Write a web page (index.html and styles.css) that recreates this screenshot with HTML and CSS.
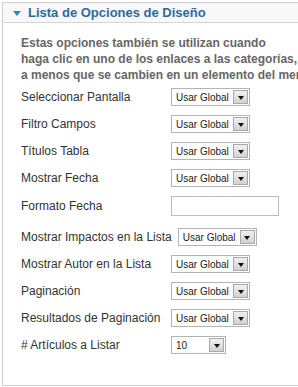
FILE: index.html
```html
<!DOCTYPE html>
<html lang="es">
  <head>
    <meta charset="UTF-8" />
    <title>Lista de Opciones de Diseño</title>
    <link rel="stylesheet" href="styles.css">
  </head>
  <body>
    <div class="panel">
      <h3 class="panel-toggler"><span class="arrow"></span>Lista de Opciones de Diseño</h3>

      <div class="panel-body">
        <p class="param-desc">
          Estas opciones también se utilizan cuando<br />
          haga clic en uno de los enlaces a las categorías,<br />
          a menos que se cambien en un elemento del menú.
        </p>

        <div class="paramlist">
          <div class="param">
            <label>Seleccionar Pantalla</label>
            <div class="select"><span>Usar Global</span><b class="drop"></b></div>
          </div>
          <div class="param">
            <label>Filtro Campos</label>
            <div class="select"><span>Usar Global</span><b class="drop"></b></div>
          </div>
          <div class="param">
            <label>Títulos Tabla</label>
            <div class="select"><span>Usar Global</span><b class="drop"></b></div>
          </div>
          <div class="param">
            <label>Mostrar Fecha</label>
            <div class="select"><span>Usar Global</span><b class="drop"></b></div>
          </div>
          <div class="param param-text">
            <label>Formato Fecha</label>
            <input type="text" class="text-input" />
          </div>
          <div class="param">
            <label>Mostrar Impactos en la Lista</label>
            <div class="select"><span>Usar Global</span><b class="drop"></b></div>
          </div>
          <div class="param">
            <label>Mostrar Autor en la Lista</label>
            <div class="select"><span>Usar Global</span><b class="drop"></b></div>
          </div>
          <div class="param">
            <label>Paginación</label>
            <div class="select"><span>Usar Global</span><b class="drop"></b></div>
          </div>
          <div class="param">
            <label>Resultados de Paginación</label>
            <div class="select"><span>Usar Global</span><b class="drop"></b></div>
          </div>
          <div class="param">
            <label># Artículos a Listar</label>
            <div class="select select-small"><span>10</span><b class="drop"></b></div>
          </div>
        </div>
      </div>
    </div>
  </body>
</html>
```

FILE: styles.css
```css
* {
  margin: 0;
  padding: 0;
  box-sizing: border-box;
  font-family: "Liberation Sans", Arial, sans-serif;
}

body {
  background: white;
  overflow: hidden;
  height: 387px;
}

.panel {
  margin: 2px 0 0 2px;
  width: 330px;
  height: 384px;
  border: 1px solid #cfcfcf;
}

.panel-toggler {
  height: 20px;
  background: #f8f8f8;
  border-bottom: 1px solid #d4d4d4;
  color: #2b6c9e;
  font-size: 13px;
  font-weight: bold;
  line-height: 20px;
  display: flex;
  align-items: center;
  padding-left: 10px;
}

.arrow {
  width: 0;
  height: 0;
  border-left: 4px solid transparent;
  border-right: 4px solid transparent;
  border-top: 5px solid #3b82b8;
  margin-right: 7px;
  margin-top: 1px;
}

.panel-body {
  padding: 12px 0 0 18px;
}

.param-desc {
  color: #666;
  font-size: 12px;
  font-weight: bold;
  line-height: 16px;
  white-space: nowrap;
}

.paramlist {
  margin-top: 5px;
  display: flex;
  flex-direction: column;
  gap: 9px;
}

.param {
  display: flex;
  align-items: center;
  gap: 6px;
}

.param label {
  min-width: 144px;
  white-space: nowrap;
  color: #333;
  font-size: 12px;
}

.param-text {
  margin-bottom: 3px;
}

.select {
  width: 79px;
  height: 18px;
  border: 1px solid #b4b4b4;
  background: white;
  display: flex;
  align-items: center;
  justify-content: space-between;
  padding: 1px 1px 1px 4px;
  font-size: 10px;
  color: #222;
}

.select-small {
  width: 55px;
}

.drop {
  width: 15px;
  height: 14px;
  background: linear-gradient(#f0f0f0, #d2d2d2);
  border: 1px solid #a9a9a9;
  display: flex;
  align-items: center;
  justify-content: center;
}

.drop::after {
  content: "";
  width: 0;
  height: 0;
  border-left: 3.5px solid transparent;
  border-right: 3.5px solid transparent;
  border-top: 4px solid #111;
  margin-top: 2px;
}

.text-input {
  width: 108px;
  height: 20px;
  border: 1px solid #bdbdbd;
  background: white;
}
```
